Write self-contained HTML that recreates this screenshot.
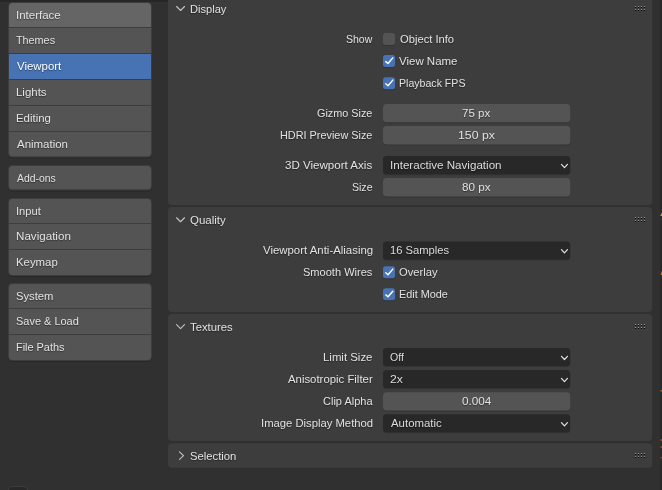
<!DOCTYPE html>
<html><head><meta charset="utf-8"><title>Blender Preferences</title>
<style>
html,body{margin:0;padding:0}
body{width:662px;height:490px;overflow:hidden;background:#303030;position:relative;font-family:"Liberation Sans",sans-serif;font-size:11.5px;line-height:14px}
svg{position:absolute;left:0;top:0}
.t{position:absolute;white-space:nowrap;text-shadow:0 1px 1px rgba(0,0,0,.45)}
#tx{position:absolute;left:0;top:0;width:662px;height:490px;will-change:transform}
</style></head>
<body>
<svg width="662" height="490" viewBox="0 0 662 490">
<rect x="0.00" y="0.00" width="168.00" height="2.00" rx="0" fill="#262626" />
<rect x="660.00" y="0.00" width="2.00" height="490.00" rx="0" fill="#292929" />
<rect x="8.00" y="3.00" width="144.00" height="155.60" rx="4.5" fill="rgba(0,0,0,0.18)" />
<rect x="8.00" y="2.00" width="144.00" height="155.60" rx="4.5" fill="#3d3d3d" />
<clipPath id="c2"><rect x="9" y="3" width="142" height="153.6" rx="3.5"/></clipPath>
<g clip-path="url(#c2)">
<rect x="9.00" y="3.00" width="142.00" height="24.00" rx="0" fill="#656565" />
<rect x="9.00" y="28.00" width="142.00" height="25.00" rx="0" fill="#545454" />
<rect x="9.00" y="54.00" width="142.00" height="25.00" rx="0" fill="#4772b3" />
<rect x="9.00" y="80.00" width="142.00" height="25.00" rx="0" fill="#545454" />
<rect x="9.00" y="106.00" width="142.00" height="25.00" rx="0" fill="#545454" />
<rect x="9.00" y="132.00" width="142.00" height="24.60" rx="0" fill="#545454" />
</g>
<rect x="8.00" y="166.00" width="144.00" height="25.60" rx="4.5" fill="rgba(0,0,0,0.18)" />
<rect x="8.00" y="165.00" width="144.00" height="25.60" rx="4.5" fill="#3d3d3d" />
<clipPath id="c165"><rect x="9" y="166" width="142" height="23.599999999999994" rx="3.5"/></clipPath>
<g clip-path="url(#c165)">
<rect x="9.00" y="166.00" width="142.00" height="23.60" rx="0" fill="#545454" />
</g>
<rect x="8.00" y="199.00" width="144.00" height="78.00" rx="4.5" fill="rgba(0,0,0,0.18)" />
<rect x="8.00" y="198.00" width="144.00" height="78.00" rx="4.5" fill="#3d3d3d" />
<clipPath id="c198"><rect x="9" y="199" width="142" height="76" rx="3.5"/></clipPath>
<g clip-path="url(#c198)">
<rect x="9.00" y="199.00" width="142.00" height="24.00" rx="0" fill="#545454" />
<rect x="9.00" y="224.00" width="142.00" height="25.00" rx="0" fill="#545454" />
<rect x="9.00" y="250.00" width="142.00" height="25.00" rx="0" fill="#545454" />
</g>
<rect x="8.00" y="284.00" width="144.00" height="78.00" rx="4.5" fill="rgba(0,0,0,0.18)" />
<rect x="8.00" y="283.00" width="144.00" height="78.00" rx="4.5" fill="#3d3d3d" />
<clipPath id="c283"><rect x="9" y="284" width="142" height="76" rx="3.5"/></clipPath>
<g clip-path="url(#c283)">
<rect x="9.00" y="284.00" width="142.00" height="24.00" rx="0" fill="#545454" />
<rect x="9.00" y="309.00" width="142.00" height="25.00" rx="0" fill="#545454" />
<rect x="9.00" y="335.00" width="142.00" height="25.00" rx="0" fill="#545454" />
</g>
<rect x="168.00" y="-4.00" width="484.20" height="208.95" rx="4" fill="#3d3d3d" />
<rect x="168.00" y="206.95" width="484.20" height="105.15" rx="4" fill="#3d3d3d" />
<rect x="168.00" y="314.10" width="484.20" height="126.80" rx="4" fill="#3d3d3d" />
<rect x="168.00" y="443.20" width="484.20" height="24.60" rx="4" fill="#3d3d3d" />
<rect x="383.00" y="105.10" width="187.20" height="18.10" rx="3.5" fill="rgba(0,0,0,0.16)" />
<rect x="383.00" y="104.10" width="187.20" height="18.10" rx="3.5" fill="#545454" />
<rect x="383.00" y="127.10" width="187.20" height="18.30" rx="3.5" fill="rgba(0,0,0,0.16)" />
<rect x="383.00" y="126.10" width="187.20" height="18.30" rx="3.5" fill="#545454" />
<rect x="383.00" y="179.10" width="187.20" height="18.30" rx="3.5" fill="rgba(0,0,0,0.16)" />
<rect x="383.00" y="178.10" width="187.20" height="18.30" rx="3.5" fill="#545454" />
<rect x="383.00" y="393.20" width="187.20" height="18.20" rx="3.5" fill="rgba(0,0,0,0.16)" />
<rect x="383.00" y="392.20" width="187.20" height="18.20" rx="3.5" fill="#545454" />
<rect x="383.00" y="157.10" width="187.20" height="18.10" rx="3.5" fill="rgba(0,0,0,0.16)" />
<rect x="383.00" y="156.10" width="187.20" height="18.10" rx="3.5" fill="#282828" />
<path d="M561.45 164.40 L564.45 167.60 L567.45 164.40" fill="none" stroke="#e4e4e4" stroke-width="1.2" stroke-linecap="round" stroke-linejoin="round"/>
<rect x="383.00" y="242.40" width="187.20" height="18.20" rx="3.5" fill="rgba(0,0,0,0.16)" />
<rect x="383.00" y="241.40" width="187.20" height="18.20" rx="3.5" fill="#282828" />
<path d="M561.45 249.70 L564.45 252.90 L567.45 249.70" fill="none" stroke="#e4e4e4" stroke-width="1.2" stroke-linecap="round" stroke-linejoin="round"/>
<rect x="383.00" y="349.00" width="187.20" height="18.10" rx="3.5" fill="rgba(0,0,0,0.16)" />
<rect x="383.00" y="348.00" width="187.20" height="18.10" rx="3.5" fill="#282828" />
<path d="M561.45 356.30 L564.45 359.50 L567.45 356.30" fill="none" stroke="#e4e4e4" stroke-width="1.2" stroke-linecap="round" stroke-linejoin="round"/>
<rect x="383.00" y="371.10" width="187.20" height="18.00" rx="3.5" fill="rgba(0,0,0,0.16)" />
<rect x="383.00" y="370.10" width="187.20" height="18.00" rx="3.5" fill="#282828" />
<path d="M561.45 378.40 L564.45 381.60 L567.45 378.40" fill="none" stroke="#e4e4e4" stroke-width="1.2" stroke-linecap="round" stroke-linejoin="round"/>
<rect x="383.00" y="415.30" width="187.20" height="18.00" rx="3.5" fill="rgba(0,0,0,0.16)" />
<rect x="383.00" y="414.30" width="187.20" height="18.00" rx="3.5" fill="#282828" />
<path d="M561.45 422.60 L564.45 425.80 L567.45 422.60" fill="none" stroke="#e4e4e4" stroke-width="1.2" stroke-linecap="round" stroke-linejoin="round"/>
<rect x="383.00" y="34.00" width="12.00" height="12.00" rx="2.5" fill="rgba(0,0,0,0.18)" />
<rect x="383.00" y="33.00" width="12.00" height="12.00" rx="2.5" fill="#545454" />
<rect x="383.00" y="56.00" width="12.00" height="12.00" rx="2.5" fill="rgba(0,0,0,0.18)" />
<rect x="383.00" y="55.00" width="12.00" height="12.00" rx="2.5" fill="#4772b3" />
<path d="M385.8 61.60 L388.0 63.50 L392.8 57.90" fill="none" stroke="#ffffff" stroke-width="1.45" stroke-linecap="round" stroke-linejoin="round"/>
<rect x="383.00" y="78.20" width="12.00" height="12.00" rx="2.5" fill="rgba(0,0,0,0.18)" />
<rect x="383.00" y="77.20" width="12.00" height="12.00" rx="2.5" fill="#4772b3" />
<path d="M385.8 83.80 L388.0 85.70 L392.8 80.10" fill="none" stroke="#ffffff" stroke-width="1.45" stroke-linecap="round" stroke-linejoin="round"/>
<rect x="383.00" y="267.20" width="12.00" height="12.00" rx="2.5" fill="rgba(0,0,0,0.18)" />
<rect x="383.00" y="266.20" width="12.00" height="12.00" rx="2.5" fill="#4772b3" />
<path d="M385.8 272.80 L388.0 274.70 L392.8 269.10" fill="none" stroke="#ffffff" stroke-width="1.45" stroke-linecap="round" stroke-linejoin="round"/>
<rect x="383.00" y="289.30" width="12.00" height="12.00" rx="2.5" fill="rgba(0,0,0,0.18)" />
<rect x="383.00" y="288.30" width="12.00" height="12.00" rx="2.5" fill="#4772b3" />
<path d="M385.8 294.90 L388.0 296.80 L392.8 291.20" fill="none" stroke="#ffffff" stroke-width="1.45" stroke-linecap="round" stroke-linejoin="round"/>
<path d="M176.6 6.50 L180.55 10.50 L184.5 6.50" fill="none" stroke="#c4c4c4" stroke-width="1.1" stroke-linecap="round" stroke-linejoin="round"/>
<path d="M176.6 217.75 L180.55 221.75 L184.5 217.75" fill="none" stroke="#c4c4c4" stroke-width="1.1" stroke-linecap="round" stroke-linejoin="round"/>
<path d="M176.6 324.55 L180.55 328.55 L184.5 324.55" fill="none" stroke="#c4c4c4" stroke-width="1.1" stroke-linecap="round" stroke-linejoin="round"/>
<path d="M179.5 451.9 L183.5 455.6 L179.5 459.3" fill="none" stroke="#c4c4c4" stroke-width="1.1" stroke-linecap="round" stroke-linejoin="round"/>
<rect x="635" y="6" width="1" height="1" fill="#9a9a9a" shape-rendering="crispEdges"/>
<rect x="635" y="7" width="1" height="1" fill="#000" shape-rendering="crispEdges"/>
<rect x="635" y="9" width="1" height="1" fill="#9a9a9a" shape-rendering="crispEdges"/>
<rect x="635" y="10" width="1" height="1" fill="#000" shape-rendering="crispEdges"/>
<rect x="638" y="6" width="1" height="1" fill="#9a9a9a" shape-rendering="crispEdges"/>
<rect x="638" y="7" width="1" height="1" fill="#000" shape-rendering="crispEdges"/>
<rect x="638" y="9" width="1" height="1" fill="#9a9a9a" shape-rendering="crispEdges"/>
<rect x="638" y="10" width="1" height="1" fill="#000" shape-rendering="crispEdges"/>
<rect x="641" y="6" width="1" height="1" fill="#9a9a9a" shape-rendering="crispEdges"/>
<rect x="641" y="7" width="1" height="1" fill="#000" shape-rendering="crispEdges"/>
<rect x="641" y="9" width="1" height="1" fill="#9a9a9a" shape-rendering="crispEdges"/>
<rect x="641" y="10" width="1" height="1" fill="#000" shape-rendering="crispEdges"/>
<rect x="644" y="6" width="1" height="1" fill="#9a9a9a" shape-rendering="crispEdges"/>
<rect x="644" y="7" width="1" height="1" fill="#000" shape-rendering="crispEdges"/>
<rect x="644" y="9" width="1" height="1" fill="#9a9a9a" shape-rendering="crispEdges"/>
<rect x="644" y="10" width="1" height="1" fill="#000" shape-rendering="crispEdges"/>
<rect x="635" y="217" width="1" height="1" fill="#9a9a9a" shape-rendering="crispEdges"/>
<rect x="635" y="218" width="1" height="1" fill="#000" shape-rendering="crispEdges"/>
<rect x="635" y="220" width="1" height="1" fill="#9a9a9a" shape-rendering="crispEdges"/>
<rect x="635" y="221" width="1" height="1" fill="#000" shape-rendering="crispEdges"/>
<rect x="638" y="217" width="1" height="1" fill="#9a9a9a" shape-rendering="crispEdges"/>
<rect x="638" y="218" width="1" height="1" fill="#000" shape-rendering="crispEdges"/>
<rect x="638" y="220" width="1" height="1" fill="#9a9a9a" shape-rendering="crispEdges"/>
<rect x="638" y="221" width="1" height="1" fill="#000" shape-rendering="crispEdges"/>
<rect x="641" y="217" width="1" height="1" fill="#9a9a9a" shape-rendering="crispEdges"/>
<rect x="641" y="218" width="1" height="1" fill="#000" shape-rendering="crispEdges"/>
<rect x="641" y="220" width="1" height="1" fill="#9a9a9a" shape-rendering="crispEdges"/>
<rect x="641" y="221" width="1" height="1" fill="#000" shape-rendering="crispEdges"/>
<rect x="644" y="217" width="1" height="1" fill="#9a9a9a" shape-rendering="crispEdges"/>
<rect x="644" y="218" width="1" height="1" fill="#000" shape-rendering="crispEdges"/>
<rect x="644" y="220" width="1" height="1" fill="#9a9a9a" shape-rendering="crispEdges"/>
<rect x="644" y="221" width="1" height="1" fill="#000" shape-rendering="crispEdges"/>
<rect x="635" y="324" width="1" height="1" fill="#9a9a9a" shape-rendering="crispEdges"/>
<rect x="635" y="325" width="1" height="1" fill="#000" shape-rendering="crispEdges"/>
<rect x="635" y="327" width="1" height="1" fill="#9a9a9a" shape-rendering="crispEdges"/>
<rect x="635" y="328" width="1" height="1" fill="#000" shape-rendering="crispEdges"/>
<rect x="638" y="324" width="1" height="1" fill="#9a9a9a" shape-rendering="crispEdges"/>
<rect x="638" y="325" width="1" height="1" fill="#000" shape-rendering="crispEdges"/>
<rect x="638" y="327" width="1" height="1" fill="#9a9a9a" shape-rendering="crispEdges"/>
<rect x="638" y="328" width="1" height="1" fill="#000" shape-rendering="crispEdges"/>
<rect x="641" y="324" width="1" height="1" fill="#9a9a9a" shape-rendering="crispEdges"/>
<rect x="641" y="325" width="1" height="1" fill="#000" shape-rendering="crispEdges"/>
<rect x="641" y="327" width="1" height="1" fill="#9a9a9a" shape-rendering="crispEdges"/>
<rect x="641" y="328" width="1" height="1" fill="#000" shape-rendering="crispEdges"/>
<rect x="644" y="324" width="1" height="1" fill="#9a9a9a" shape-rendering="crispEdges"/>
<rect x="644" y="325" width="1" height="1" fill="#000" shape-rendering="crispEdges"/>
<rect x="644" y="327" width="1" height="1" fill="#9a9a9a" shape-rendering="crispEdges"/>
<rect x="644" y="328" width="1" height="1" fill="#000" shape-rendering="crispEdges"/>
<rect x="635" y="453" width="1" height="1" fill="#9a9a9a" shape-rendering="crispEdges"/>
<rect x="635" y="454" width="1" height="1" fill="#000" shape-rendering="crispEdges"/>
<rect x="635" y="456" width="1" height="1" fill="#9a9a9a" shape-rendering="crispEdges"/>
<rect x="635" y="457" width="1" height="1" fill="#000" shape-rendering="crispEdges"/>
<rect x="638" y="453" width="1" height="1" fill="#9a9a9a" shape-rendering="crispEdges"/>
<rect x="638" y="454" width="1" height="1" fill="#000" shape-rendering="crispEdges"/>
<rect x="638" y="456" width="1" height="1" fill="#9a9a9a" shape-rendering="crispEdges"/>
<rect x="638" y="457" width="1" height="1" fill="#000" shape-rendering="crispEdges"/>
<rect x="641" y="453" width="1" height="1" fill="#9a9a9a" shape-rendering="crispEdges"/>
<rect x="641" y="454" width="1" height="1" fill="#000" shape-rendering="crispEdges"/>
<rect x="641" y="456" width="1" height="1" fill="#9a9a9a" shape-rendering="crispEdges"/>
<rect x="641" y="457" width="1" height="1" fill="#000" shape-rendering="crispEdges"/>
<rect x="644" y="453" width="1" height="1" fill="#9a9a9a" shape-rendering="crispEdges"/>
<rect x="644" y="454" width="1" height="1" fill="#000" shape-rendering="crispEdges"/>
<rect x="644" y="456" width="1" height="1" fill="#9a9a9a" shape-rendering="crispEdges"/>
<rect x="644" y="457" width="1" height="1" fill="#000" shape-rendering="crispEdges"/>
<rect x="8.00" y="486.00" width="20.00" height="20.00" rx="4.5" fill="#3d3d3d" />
<rect x="9.00" y="487.00" width="18.00" height="18.00" rx="3.5" fill="#282828" />
<path d="M662 212.6 L660.1 216 L662 216 Z" fill="#e0902a"/>
<rect x="660.30" y="219.00" width="1.70" height="1.00" rx="0" fill="#3b3b3b" />
<path d="M662 270.8 L660.2 274.6 L662 275.2 Z" fill="#c07c28" opacity="0.8"/>
<rect x="660.40" y="390.00" width="1.60" height="1.60" rx="0" fill="#b5742a" opacity="0.75"/>
<rect x="660.40" y="439.30" width="1.60" height="1.50" rx="0" fill="#b5742a" opacity="0.7"/>
<rect x="660.40" y="446.30" width="1.60" height="1.50" rx="0" fill="#b5742a" opacity="0.7"/>
<rect x="660.40" y="457.00" width="1.60" height="1.50" rx="0" fill="#a04a3c" opacity="0.7"/>
</svg>
<div id="tx">
<span class="t" style="left:15.69px;top:8px;color:#e2e2e2;transform:scaleX(1.0003);transform-origin:0 0">Interface</span>
<span class="t" style="left:16.38px;top:33px;color:#e2e2e2;transform:scaleX(0.9395);transform-origin:0 0">Themes</span>
<span class="t" style="left:16.55px;top:59px;color:#ffffff;transform:scaleX(0.9924);transform-origin:0 0">Viewport</span>
<span class="t" style="left:15.85px;top:85px;color:#e2e2e2;transform:scaleX(0.9961);transform-origin:0 0">Lights</span>
<span class="t" style="left:15.85px;top:111px;color:#e2e2e2;transform:scaleX(0.9928);transform-origin:0 0">Editing</span>
<span class="t" style="left:16.57px;top:137px;color:#e2e2e2;transform:scaleX(0.9963);transform-origin:0 0">Animation</span>
<span class="t" style="left:16.58px;top:171px;color:#e2e2e2;transform:scaleX(0.9043);transform-origin:0 0">Add-ons</span>
<span class="t" style="left:15.76px;top:204px;color:#e2e2e2;transform:scaleX(0.9708);transform-origin:0 0">Input</span>
<span class="t" style="left:15.84px;top:229px;color:#e2e2e2;transform:scaleX(1.0095);transform-origin:0 0">Navigation</span>
<span class="t" style="left:15.86px;top:255px;color:#e2e2e2;transform:scaleX(0.9890);transform-origin:0 0">Keymap</span>
<span class="t" style="left:15.97px;top:289px;color:#e2e2e2;transform:scaleX(0.9771);transform-origin:0 0">System</span>
<span class="t" style="left:15.99px;top:314px;color:#e2e2e2;transform:scaleX(0.9536);transform-origin:0 0">Save &amp; Load</span>
<span class="t" style="left:15.89px;top:340px;color:#e2e2e2;transform:scaleX(0.9481);transform-origin:0 0">File Paths</span>
<span class="t" style="left:190.08px;top:2px;color:#e2e2e2;transform:scaleX(0.9650);transform-origin:0 0">Display</span>
<span class="t" style="left:190.13px;top:213px;color:#e2e2e2;transform:scaleX(1.0009);transform-origin:0 0">Quality</span>
<span class="t" style="left:189.66px;top:320px;color:#e2e2e2;transform:scaleX(0.9823);transform-origin:0 0">Textures</span>
<span class="t" style="left:189.97px;top:449px;color:#e2e2e2;transform:scaleX(0.9799);transform-origin:0 0">Selection</span>
<span class="t" style="left:345.83px;top:32px;color:#e2e2e2;transform:scaleX(0.9128);transform-origin:0 0">Show</span>
<span class="t" style="left:317.02px;top:106px;color:#e2e2e2;transform:scaleX(0.9421);transform-origin:0 0">Gizmo Size</span>
<span class="t" style="left:280.00px;top:128px;color:#e2e2e2;transform:scaleX(0.9450);transform-origin:0 0">HDRI Preview Size</span>
<span class="t" style="left:285.24px;top:158px;color:#e2e2e2;transform:scaleX(1.0057);transform-origin:0 0">3D Viewport Axis</span>
<span class="t" style="left:352.02px;top:180px;color:#e2e2e2;transform:scaleX(0.9156);transform-origin:0 0">Size</span>
<span class="t" style="left:262.74px;top:243px;color:#e2e2e2;transform:scaleX(0.9921);transform-origin:0 0">Viewport Anti-Aliasing</span>
<span class="t" style="left:303.09px;top:265px;color:#e2e2e2;transform:scaleX(0.9606);transform-origin:0 0">Smooth Wires</span>
<span class="t" style="left:323.06px;top:350px;color:#e2e2e2;transform:scaleX(0.9916);transform-origin:0 0">Limit Size</span>
<span class="t" style="left:287.67px;top:372px;color:#e2e2e2;transform:scaleX(0.9886);transform-origin:0 0">Anisotropic Filter</span>
<span class="t" style="left:322.61px;top:394px;color:#e2e2e2;transform:scaleX(0.9568);transform-origin:0 0">Clip Alpha</span>
<span class="t" style="left:260.72px;top:416px;color:#e2e2e2;transform:scaleX(0.9794);transform-origin:0 0">Image Display Method</span>
<span class="t" style="left:399.54px;top:32px;color:#e2e2e2;transform:scaleX(0.9726);transform-origin:0 0">Object Info</span>
<span class="t" style="left:399.34px;top:54px;color:#e2e2e2;transform:scaleX(0.9978);transform-origin:0 0">View Name</span>
<span class="t" style="left:399.22px;top:76px;color:#e2e2e2;transform:scaleX(0.9201);transform-origin:0 0">Playback FPS</span>
<span class="t" style="left:399.23px;top:265px;color:#e2e2e2;transform:scaleX(0.9739);transform-origin:0 0">Overlay</span>
<span class="t" style="left:399.30px;top:287px;color:#e2e2e2;transform:scaleX(0.9424);transform-origin:0 0">Edit Mode</span>
<span class="t" style="left:462.27px;top:106px;color:#e2e2e2;transform:scaleX(1.0043);transform-origin:0 0">75 px</span>
<span class="t" style="left:457.88px;top:128px;color:#e2e2e2;transform:scaleX(1.0674);transform-origin:0 0">150 px</span>
<span class="t" style="left:462.17px;top:180px;color:#e2e2e2;transform:scaleX(1.0172);transform-origin:0 0">80 px</span>
<span class="t" style="left:461.70px;top:394px;color:#e2e2e2;transform:scaleX(1.0220);transform-origin:0 0">0.004</span>
<span class="t" style="left:389.89px;top:158px;color:#dcdcdc;transform:scaleX(1.0086);transform-origin:0 0">Interactive Navigation</span>
<span class="t" style="left:390.11px;top:243px;color:#dcdcdc;transform:scaleX(0.9737);transform-origin:0 0">16 Samples</span>
<span class="t" style="left:390.46px;top:350px;color:#dcdcdc;transform:scaleX(0.9190);transform-origin:0 0">Off</span>
<span class="t" style="left:390.40px;top:372px;color:#dcdcdc;transform:scaleX(1.0611);transform-origin:0 0">2x</span>
<span class="t" style="left:390.77px;top:416px;color:#dcdcdc;transform:scaleX(0.9924);transform-origin:0 0">Automatic</span>
</div>
</body></html>
